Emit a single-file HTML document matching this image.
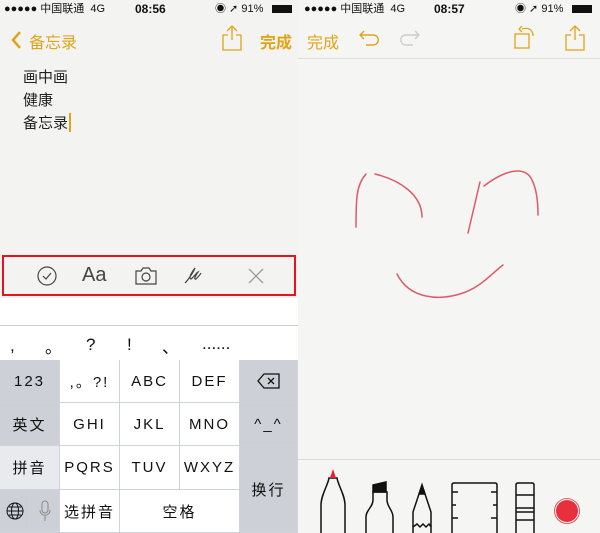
<!DOCTYPE html>
<html><head><meta charset="utf-8"><style>
*{margin:0;padding:0;box-sizing:border-box}
body{width:600px;height:533px;position:relative;overflow:hidden;background:#f4f4f3;font-family:"Liberation Sans","Noto Sans CJK SC",sans-serif}
.a{position:absolute}
.st{font-size:11px;line-height:14px;color:#111;top:2px}
.y{color:#e0a419}
.k{position:absolute;background:#fff;border-right:1px solid #cfd2d6;border-bottom:1px solid #cfd2d6;display:flex;align-items:center;justify-content:center;font-size:15px;color:#111;letter-spacing:2px}
.g{background:#cdd1d7}
</style></head><body>
<!-- left -->
<div class="a" style="left:0;top:0;width:298px;height:298px;background:#f3f3f1"></div>
<div class="a st" style="left:4px">●●●●● 中国联通 &nbsp;4G</div>
<div class="a st" style="left:135px;font-weight:bold;font-size:12px">08:56</div>
<div class="a st" style="left:215px">◉ ➚ 91%</div>
<div class="a" style="left:272px;top:5px;width:20px;height:8px;background:#111"></div>
<svg class="a" style="left:10px;top:30px" width="14" height="20"><path d="M10 2L3 10L10 18" stroke="#e0a419" stroke-width="2.5" fill="none"/></svg>
<div class="a y" style="left:29px;top:29px;font-size:16px">备忘录</div>
<svg class="a" style="left:221px;top:24px" width="22" height="28"><path d="M11 2V16M6 7L11 2L16 7M7 11H2V26H20V11H15" stroke="#e0a419" stroke-width="1.3" fill="none"/></svg>
<div class="a y" style="left:260px;top:29px;font-size:16px;font-weight:bold">完成</div>
<div class="a" style="left:23px;top:66px;font-size:15px;line-height:23px;color:#222">画中画<br>健康<br>备忘录</div>
<div class="a" style="left:69px;top:113px;width:1.5px;height:19px;background:#e0a419"></div>
<div class="a" style="left:2px;top:255px;width:294px;height:41px;border:2px solid #e8141c"></div>
<svg class="a" style="left:36px;top:265px" width="22" height="22"><circle cx="11" cy="11" r="9" stroke="#444" stroke-width="1.2" fill="none"/><path d="M7 11L10 14L15 8" stroke="#444" stroke-width="1.2" fill="none"/></svg>
<div class="a" style="left:82px;top:264px;font-size:20px;line-height:22px;color:#444">Aa</div>
<svg class="a" style="left:134px;top:266px" width="24" height="20"><path d="M2 5H7L9 2H15L17 5H22V18H2Z" stroke="#444" stroke-width="1.2" fill="none"/><circle cx="12" cy="11" r="4" stroke="#444" stroke-width="1.2" fill="none"/></svg>
<svg class="a" style="left:182px;top:264px" width="22" height="22"><path d="M3 19C6 16 11 9 13 4C10 8 6 14 9 15C12 13 14 9 16 8C14 11 11 16 14 15C16 13 18 11 19 9" stroke="#444" stroke-width="1.2" fill="none"/></svg>
<svg class="a" style="left:246px;top:266px" width="20" height="20"><path d="M3 3L17 17M17 3L3 17" stroke="#999" stroke-width="1.3"/></svg>
<div class="a" style="left:0;top:298px;width:298px;height:28px;background:#fff;border-bottom:1px solid #ccc"></div>
<div class="a" style="left:0;top:326px;width:298px;height:34px;background:#fff;font-size:17px;line-height:20px;color:#111">
<span class="a" style="left:10px;top:10px">,</span><span class="a" style="left:45px;top:12px">。</span><span class="a" style="left:86px;top:9px">?</span><span class="a" style="left:127px;top:9px">!</span><span class="a" style="left:162px;top:12px">、</span><span class="a" style="left:202px;top:8px">......</span></div>
<div class="k g" style="left:0;top:360px;width:60px;height:43px">123</div>
<div class="k" style="left:60px;top:360px;width:60px;height:43px">,。?!</div>
<div class="k" style="left:120px;top:360px;width:60px;height:43px">ABC</div>
<div class="k" style="left:180px;top:360px;width:60px;height:43px">DEF</div>
<div class="k g" style="left:240px;top:360px;width:58px;height:43px"><svg width="24" height="16"><path d="M7 1H22V15H7L1 8Z" stroke="#111" stroke-width="1.3" fill="none"/><path d="M11 5L17 11M17 5L11 11" stroke="#111" stroke-width="1.3"/></svg></div>
<div class="k g" style="left:0;top:403px;width:60px;height:43px">英文</div>
<div class="k" style="left:60px;top:403px;width:60px;height:43px">GHI</div>
<div class="k" style="left:120px;top:403px;width:60px;height:43px">JKL</div>
<div class="k" style="left:180px;top:403px;width:60px;height:43px">MNO</div>
<div class="k g" style="left:240px;top:403px;width:58px;height:43px">^_^</div>
<div class="k" style="left:0;top:446px;width:60px;height:44px;background:#e8eaed">拼音</div>
<div class="k" style="left:60px;top:446px;width:60px;height:44px">PQRS</div>
<div class="k" style="left:120px;top:446px;width:60px;height:44px">TUV</div>
<div class="k" style="left:180px;top:446px;width:60px;height:44px">WXYZ</div>
<div class="k g" style="left:240px;top:446px;width:58px;height:87px">换行</div>
<div class="k g" style="left:0;top:490px;width:30px;height:43px"><svg width="20" height="20"><circle cx="10" cy="10" r="8" stroke="#111" fill="none"/><ellipse cx="10" cy="10" rx="3.5" ry="8" stroke="#111" fill="none"/><path d="M2 10H18M4 6H16M4 14H16" stroke="#111"/></svg></div>
<div class="k g" style="left:30px;top:490px;width:30px;height:43px"><svg width="14" height="22"><rect x="4" y="1" width="6" height="12" rx="3" stroke="#888" fill="none"/><path d="M2 10C2 17 12 17 12 10M7 16V21" stroke="#888" fill="none"/></svg></div>
<div class="k" style="left:60px;top:490px;width:60px;height:43px">选拼音</div>
<div class="k" style="left:120px;top:490px;width:120px;height:43px">空格</div>
<!-- right -->
<div class="a" style="left:298px;top:0;width:302px;height:533px;background:#f5f5f4"></div>
<div class="a st" style="left:304px">●●●●● 中国联通 &nbsp;4G</div>
<div class="a st" style="left:434px;font-weight:bold;font-size:12px">08:57</div>
<div class="a st" style="left:515px">◉ ➚ 91%</div>
<div class="a" style="left:572px;top:5px;width:20px;height:8px;background:#111"></div>
<div class="a y" style="left:307px;top:29px;font-size:16px">完成</div>
<svg class="a" style="left:358px;top:28px" width="24" height="20"><path d="M6 3L2 7L6 11M2 7H15C22 7 22 17 15 17H8" stroke="#e0a419" stroke-width="1.4" fill="none"/></svg>
<svg class="a" style="left:397px;top:28px" width="24" height="20"><path d="M18 3L22 7L18 11M22 7H9C2 7 2 17 9 17H16" stroke="#ccc" stroke-width="1.4" fill="none"/></svg>
<svg class="a" style="left:513px;top:24px" width="28" height="28"><rect x="2" y="10" width="14" height="14" stroke="#e0a419" stroke-width="1.3" fill="none"/><path d="M9 5C16 3 20 6 20 12M6 5L9 2M6 5L9 8" stroke="#e0a419" stroke-width="1.3" fill="none"/></svg>
<svg class="a" style="left:564px;top:24px" width="22" height="28"><path d="M11 2V16M6 7L11 2L16 7M7 11H2V26H20V11H15" stroke="#e0a419" stroke-width="1.3" fill="none"/></svg>
<div class="a" style="left:298px;top:58px;width:302px;height:1px;background:#ddd"></div>
<svg class="a" style="left:340px;top:160px" width="220" height="150"><g stroke="#e05a66" stroke-width="1.5" fill="none" stroke-linecap="round"><path d="M16 67C16 40 16 25 26 14"/><path d="M35 14C60 20 82 35 82 57"/><path d="M128 73L140 22"/><path d="M144 26C165 10 185 5 192 20C196 28 198 40 198 55"/><path d="M57 114C70 140 100 140 120 134C140 128 150 115 163 105"/></g></svg>
<div class="a" style="left:298px;top:459px;width:302px;height:1px;background:#ddd"></div>
<svg class="a" style="left:300px;top:460px" width="300" height="73"><g stroke="#111" stroke-width="1.5" fill="none">
<path d="M21 73V45C21 35 28 25 29 18H37C38 25 45 35 45 45V73"/><path d="M30 18L33 9L36 18Z" fill="#e8202c" stroke="none"/>
<path d="M66 73V57C66 50 73 47 73 40V32H87V40C87 47 93 50 93 57V73"/><path d="M73 32V25L86 22V32Z" fill="#111"/>
<path d="M113 73V52L122 25L131 52V73M113 67L117 64L120 67L123 64L126 67L129 64L131 67"/><path d="M119 34L122 25L125 34Z" fill="#111"/>
<path d="M152 73V25Q152 23 154 23H195Q197 23 197 25V73M152 32H158M191 32H197M152 45H156M193 45H197M152 58H158M191 58H197"/>
<path d="M216 73V25Q216 23 218 23H232Q234 23 234 25V73M216 35H234M216 48H234M216 52H234M216 60H234"/></g>
<circle cx="267" cy="51" r="11" fill="#e8303c"/><circle cx="267" cy="51" r="12.5" stroke="#e8303c" fill="none" stroke-width=".8"/></svg>
</body></html>
